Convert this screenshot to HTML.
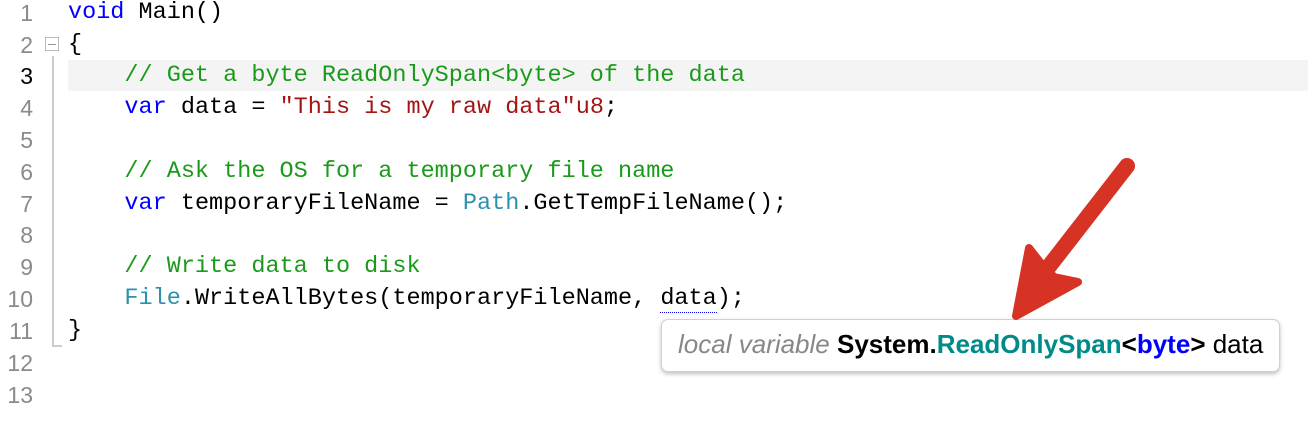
<!DOCTYPE html>
<html><head><meta charset="utf-8"><style>
html,body{margin:0;padding:0;background:#fff;width:1308px;height:438px;overflow:hidden;position:relative}
.ln{position:absolute;left:0;width:33px;text-align:right;font:23px "Liberation Sans",sans-serif;color:#8a8a8a;height:32px;line-height:32px}
.code{position:absolute;left:68px;font:23.5px "Liberation Mono",monospace;white-space:pre;height:32px;line-height:32px;color:#000}
.k{color:#0000ff}.c{color:#1a9a1a}.s{color:#a31515}.t{color:#2b91af}
</style></head><body>
<div style="position:absolute;left:68px;top:60px;width:1240px;height:31px;background:#f4f4f4"></div>
<div style="position:absolute;left:45px;top:37px;width:14px;height:14px;border:1px solid #bbb;box-sizing:border-box"></div>
<div style="position:absolute;left:48px;top:44px;width:8px;height:1px;background:#999"></div>
<div style="position:absolute;left:52px;top:56px;width:2px;height:291px;background:#ccc"></div>
<div style="position:absolute;left:52px;top:345px;width:10px;height:2px;background:#ccc"></div>

<div class="ln" style="top:-3px">1</div>
<div class="ln" style="top:29px">2</div>
<div class="ln" style="top:60px;color:#000">3</div>
<div class="ln" style="top:92px">4</div>
<div class="ln" style="top:124px">5</div>
<div class="ln" style="top:156px">6</div>
<div class="ln" style="top:188px">7</div>
<div class="ln" style="top:219px">8</div>
<div class="ln" style="top:251px">9</div>
<div class="ln" style="top:283px">10</div>
<div class="ln" style="top:315px">11</div>
<div class="ln" style="top:347px">12</div>
<div class="ln" style="top:379px">13</div>

<div class="code" style="top:-3px"><span class="k">void</span> Main()</div>
<div class="code" style="top:29px">{</div>
<div class="code" style="top:60px">    <span class="c">// Get a byte ReadOnlySpan&lt;byte&gt; of the data</span></div>
<div class="code" style="top:92px">    <span class="k">var</span> data = <span class="s">"This is my raw data"u8</span>;</div>
<div class="code" style="top:156px">    <span class="c">// Ask the OS for a temporary file name</span></div>
<div class="code" style="top:188px">    <span class="k">var</span> temporaryFileName = <span class="t">Path</span>.GetTempFileName();</div>
<div class="code" style="top:251px">    <span class="c">// Write data to disk</span></div>
<div class="code" style="top:283px">    <span class="t">File</span>.WriteAllBytes(temporaryFileName, <span style="border-bottom:1px dotted #00f">data</span>);</div>
<div class="code" style="top:315px">}</div>

<div style="position:absolute;left:661px;top:319px;width:619px;height:53px;box-sizing:border-box;border:1px solid #d0d0d0;border-radius:7px;background:#fff;box-shadow:0 2px 4px rgba(0,0,0,0.25);font:26px 'Liberation Sans',sans-serif;line-height:49px;padding-left:16px;white-space:nowrap">
<i style="color:#888">local variable</i> <b>System.</b><b style="color:#008b8b">ReadOnlySpan</b><b>&lt;</b><b style="color:#0000ff">byte</b><b>&gt;</b> data</div>

<svg width="1308" height="438" style="position:absolute;left:0;top:0">
<line x1="1127" y1="166" x2="1040" y2="278" stroke="#d63324" stroke-width="16" stroke-linecap="round"/>
<path d="M1016,316 L1029,248 L1040,262 L1054,277 L1078,282 Z" fill="#d63324" stroke="#d63324" stroke-width="8" stroke-linejoin="round"/>
</svg>
</body></html>
